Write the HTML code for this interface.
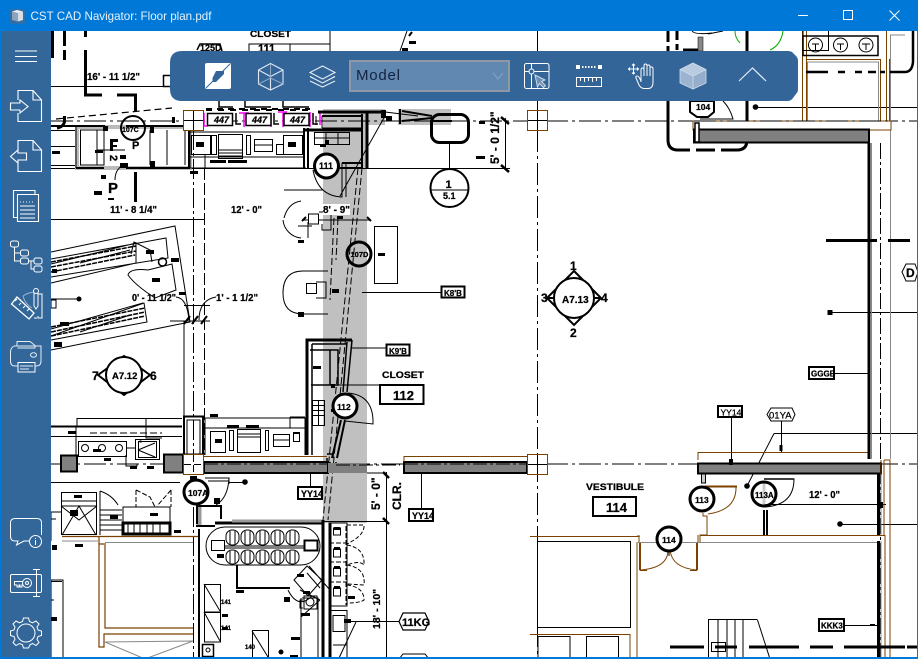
<!DOCTYPE html>
<html><head><meta charset="utf-8"><style>
html,body{margin:0;padding:0;width:918px;height:659px;overflow:hidden;background:#fff}
svg{display:block;position:absolute;left:0;top:0}
.t{font-family:"Liberation Sans",sans-serif;font-weight:bold;fill:#000;stroke:#000;stroke-width:.25}
.s{font-size:6px}.m{font-size:9px}.b{font-size:10.5px}.l{font-size:13px}
</style></head><body>
<svg width="918" height="659" viewBox="0 0 918 659" xmlns="http://www.w3.org/2000/svg">
<rect width="918" height="659" fill="#fff"/>

<!-- grey corridor -->
<g fill="#c0c0c0"><rect x="323" y="109" width="44" height="414"/><rect x="323" y="109" width="62" height="16"/><rect x="398" y="109" width="53" height="16"/></g>

<!-- grid lines -->
<g fill="none" stroke="#000" stroke-width="1">
<path d="M51 121H918" stroke-dasharray="22 4 3 4"/>
<path d="M51 464H918" stroke-dasharray="22 4 3 4"/>
<path d="M537.5 31V659" stroke-dasharray="22 4 3 4"/>
<path d="M193.5 130V659" stroke-dasharray="20 3 3 3"/>
<path d="M204.5 168V455" stroke-dasharray="12 3"/>
<path d="M880.5 143V659" stroke-dasharray="16 3 3 3"/>
<path d="M51 86.5H170M51 168.5H510M51 219.5H204M184 305.5H210M51 482.5H180M229 482.5H245"/>
<path d="M56 119 172 108" stroke-dasharray="7 4" stroke-width="1.2"/>
<path d="M184 321V455"/>
<path d="M505.5 118V170M386.5 472V659M323 521.5H386M421.5 473V509M310.5 473V487M731.5 417V463"/>
<path d="M755 107.5H918M830 312.5H918M834 373.5H868M845 625.5H878M362 292.5H441M765 504.5H886M840 524.5H918M774 433.5H918M774 433.5 747 486M781.5 421V452M345 621.5H399"/>
<path d="M351 348H386M331 385H380"/>
<path d="M449.5 143V170"/>
</g>

<!-- top left thick -->
<g fill="none" stroke="#000" stroke-width="3">
<path d="M64.5 31V46M64.5 50V60M52.5 31V58" />
<path d="M64.5 116V122Q63 127 57 128"/>
<path d="M85.5 31V37M85.5 50V95H102M117 95H135.5V112"/>
<path d="M135.5 172V202"/>
</g>

<!-- top-left rooms -->
<rect x="77" y="127" width="113" height="41" fill="none" stroke="#bbb" stroke-width="4"/>
<g fill="none" stroke="#000">
<path d="M51 126H105M126 126H190" stroke-width="2"/>
<path d="M51 130.5H75M51 146.5H75M51 165.5H75M76 125V168" />
<path d="M76 168H104M126 168H190" stroke-width="2"/>
<path d="M80.5 130V165H104V130ZM97 130V165M97 150H125" />
<path d="M150 130V165M167 130V165M185 130V165"/>
<path d="M189 125V168" stroke-width="2"/>
<circle cx="133" cy="128" r="12" stroke-width="2"/>
<path d="M115 180Q115 170 122 166"/>
</g>
<g>
<rect x="110" y="139" width="8" height="3"/><rect x="110" y="139" width="3" height="12"/><rect x="110" y="145" width="7" height="2"/>
<rect x="95" y="150" width="8" height="3"/><rect x="52" y="151" width="8" height="3"/>
<rect x="120" y="155" width="6" height="4"/><rect x="101" y="175" width="5" height="4"/><rect x="94" y="191" width="8" height="4"/><rect x="108" y="198" width="6" height="2"/>
<rect x="190" y="171" width="8" height="3"/>
<rect x="103" y="126" width="5" height="5"/><rect x="150" y="127" width="4" height="6"/><rect x="172" y="117" width="3" height="6"/>
<rect x="120" y="163" width="8" height="5"/><rect x="150" y="161" width="5" height="7"/>
</g>
<text class="t" x="122" y="132" font-size="7">107C</text>
<text class="t" x="108" y="193" font-size="15" style="font-weight:bold">P</text>
<text class="t" x="110" y="165" font-size="11" transform="rotate(90 115 160)">2</text>
<text class="t" x="132" y="149" font-size="11">P</text>
<text class="t b" x="87" y="80" textLength="53" lengthAdjust="spacingAndGlyphs">16' - 11 1/2"</text>
<rect x="163.500" y="75.500" width="9" height="11" fill="#fff" stroke="#000" stroke-width="1.500"/>
<text class="t b" x="110" y="213" textLength="47" lengthAdjust="spacingAndGlyphs">11' - 8 1/4"</text>
<text class="t b" x="231" y="213" textLength="31" lengthAdjust="spacingAndGlyphs">12' - 0"</text>

<!-- counter -->
<g fill="none" stroke="#000">
<path d="M190 131V168H306M189 132H303M190 157H303M205 168V155"/>
<rect x="191.500" y="135.500" width="19" height="19"/><rect x="211.500" y="135.500" width="5" height="19"/>
<rect x="218.500" y="134.500" width="24" height="24"/>
<path d="M218 150H242M218 153H242M218 156H242"/>
<rect x="246.500" y="135.500" width="4" height="19"/><rect x="254.500" y="139.500" width="18" height="12"/><path d="M254 145H272"/>
<rect x="276.500" y="144.500" width="7" height="10"/><rect x="283.500" y="135.500" width="19" height="19"/>
</g>
<rect x="196" y="142" width="8" height="5"/><rect x="288" y="142" width="8" height="5"/><rect x="210" y="160" width="16" height="3"/><rect x="228" y="160" width="19" height="3"/>

<!-- 447 tags -->
<g fill="none" stroke="#f0f" stroke-width="1.500"><path d="M204 113V126M232 113V126M244 113V127M271 113V127M283 113V127M310 112V127M320 112V125M204 126H208M239 113H249M278 112H287"/></g>
<g fill="#fff" stroke="#000" stroke-width="1.500"><rect x="207.500" y="113.500" width="25" height="12"/><rect x="246" y="113.500" width="25" height="12"/><rect x="284" y="113.500" width="25" height="12"/></g>
<g font-size="9" class="t" font-style="italic"><text x="214" y="123" style="font-style:italic">447</text><text x="252" y="123" style="font-style:italic">447</text><text x="290" y="123" style="font-style:italic">447</text></g>
<path d="M236 113V124H241M274 113V124H279M313 113V124H318" fill="none" stroke="#000" stroke-width="1.500"/>
<path d="M206 110H310" stroke="#000" stroke-width="2" stroke-dasharray="6 6"/>
<rect x="183.500" y="110.500" width="20" height="20" fill="#fff" stroke="#7a4100"/><path d="M193.500 111V130M184 120.500H203" stroke="#000"/>
<rect x="527.500" y="110.500" width="20" height="20" fill="#fff" stroke="#7a4100"/><path d="M537.500 111V130M528 120.500H547" stroke="#000"/>

<!-- room 111 & corridor walls -->
<g fill="none" stroke="#000">
<path d="M304 128V168M308 128V168M362 114V168" stroke-width="2"/>
<path d="M318 112H385" stroke-width="3"/>
<path d="M322 116H362" stroke-width="2"/>
<path d="M305 130H363" stroke-width="3"/>
<path d="M367 113V169" stroke-width="3"/>
<path d="M316 116V125M322 116V128M322 128H362" />
<rect x="314.500" y="132.500" width="35" height="12"/><path d="M326 132V144M338 132V144M314 138H349"/>
<path d="M340 168H362M342 163H362" stroke-width="2"/>
<path d="M342 163V197H340M346 163V197"/>
<path d="M385 116 340 196M385 112 418 116"/>
<path d="M400 109V124M402 111 432 116M402 121 432 118M432 121H452" stroke-width="2"/>
<path d="M362 168 328 520" stroke-dasharray="7 3"/>
<path d="M358 168 323 520" stroke-dasharray="7 3"/>
<path d="M338 218 336 260M334 218 330 300" stroke-dasharray="7 3"/>
<rect x="431.500" y="114.500" width="37" height="28" rx="8" stroke-width="3"/>
<circle cx="449.500" cy="188" r="19" fill="#fff" stroke-width="2"/><path d="M430 190H468"/>
<circle cx="326.500" cy="166" r="12" fill="#fff" stroke-width="3"/>
<path d="M313 170Q318 196 342 197"/>
</g>
<rect x="386" y="116" width="6" height="5"/><rect x="381" y="110" width="5" height="8"/><rect x="325" y="140" width="4" height="4"/>
<rect x="320" y="144" width="6" height="3"/>
<rect x="479" y="121" width="6" height="3"/><rect x="476" y="156" width="9" height="3"/>
<text class="t m" x="319" y="169" font-size="9.500">111</text>
<text class="t" x="445.500" y="188" font-size="11">1</text><text class="t m" x="443" y="199">5.1</text>
<text class="t" transform="translate(499 164) rotate(-90)" font-size="12">5' - 0 1/2"</text>
<path d="M501 117 509 124M501 165 509 172" stroke="#000" stroke-width="2.500"/>

<!-- 8'-9" door -->
<g fill="none" stroke="#000">
<path d="M323 190 284 190 M283 220A20 20 0 0 0 301 238M301 201Q288 203 284 218"/>
<path d="M303 220H370"/>
<rect x="308.500" y="214" width="10" height="10" fill="#fff"/><path d="M319 212H329M322 224V230H331V212M298 226H312M308 222V238"/>
<path d="M302 221 306 217M367 217 371 221" stroke-width="2"/>
</g>
<rect x="323" y="204" width="27" height="11" fill="#fff"/><text class="t b" x="323" y="213" textLength="27" lengthAdjust="spacingAndGlyphs">8' - 9"</text>
<rect x="337" y="216" width="6" height="3"/><rect x="298" y="240" width="6" height="3"/>

<g fill="#fff" stroke="#000"><rect x="374.500" y="226.500" width="23" height="57"/></g>
<rect x="378" y="253" width="7" height="3"/>
<circle cx="359" cy="254" r="12" fill="none" stroke="#000" stroke-width="3"/>
<text class="t" x="350.500" y="257" font-size="7.500">107D</text>
<rect x="441.500" y="286.500" width="23" height="11" fill="#fff" stroke="#000" stroke-width="2"/><text class="t" x="444" y="296" font-size="8">K8'B</text>

<g fill="none" stroke="#000"><path d="M328 271H303Q283 271 283 293Q283 314 303 314H328"/>
<rect x="306.500" y="283.500" width="10" height="10"/><path d="M316 282H326V298H316"/></g>
<rect x="332" y="289" width="7" height="4"/><rect x="298" y="312" width="6" height="5"/>

<!-- diamond A7.13 -->
<g fill="none" stroke="#000" stroke-width="2"><path d="M574 271 601 298 574 325 547 298Z"/><circle cx="574" cy="298" r="20" fill="#fff"/><path d="M554 298H548M594 298H600"/></g>
<text class="t" x="562" y="303" font-size="10">A7.13</text>
<text class="t" x="570" y="270" font-size="12">1</text><text class="t" x="570" y="337" font-size="12">2</text><text class="t" x="541" y="302" font-size="12">3</text><text class="t" x="601" y="302" font-size="12">4</text>

<!-- diagonal table -->
<g fill="none" stroke="#000">
<path d="M51 252 175 226 190 322 51 350M51 259 166 238 168 258 51 277M51 264 136 243 136 263 51 283M51 336 144 303 147 322 51 340M51 329 143 303M80 263 130 250M80 332 130 315"/>
<path d="M51 262 136 246M51 267 136 251M51 272 135 255M51 327 145 308M51 332 145 312M51 336 145 316" stroke-width="1.500" stroke-dasharray="5 1"/>
<path d="M131 254 134 242 150 250 152 262M148 270 172 264 176 290 155 298Q135 285 128 275 130 268 148 270"/>
<circle cx="162.500" cy="262" r="4" stroke-width="1.500"/>
</g>
<rect x="51" y="300" width="5" height="8" fill="#fff" stroke="#000"/>
<g><rect x="146" y="250" width="8" height="4"/><rect x="171" y="258" width="8" height="4"/><rect x="152" y="278" width="8" height="4"/><rect x="52" y="269" width="5" height="4"/><rect x="60" y="322" width="9" height="4"/><rect x="54" y="342" width="8" height="5"/><rect x="179" y="292" width="7" height="3"/></g>
<path d="M51 299H80" stroke="#000"/><circle cx="79" cy="299" r="2.500"/>

<text class="t b" x="132" y="301" textLength="44" lengthAdjust="spacingAndGlyphs">0' - 11 1/2"</text>
<text class="t b" x="216" y="301" textLength="42" lengthAdjust="spacingAndGlyphs">1' - 1 1/2"</text>
<g fill="none" stroke="#000"><path d="M176 297Q187 298 189 320M216 297Q199 300 199 320M170 321H210"/>
<path d="M184 324 190 316M192 324 198 316M201 324 207 316" stroke-width="2"/></g>

<!-- A7.12 -->
<g fill="none" stroke="#000" stroke-width="2"><path d="M98 375 124 356 150 375 124 395Z"/><circle cx="124" cy="375" r="18" fill="#fff"/></g>
<text class="t" x="112" y="379" font-size="9.500">A7.12</text><text class="t" x="92" y="380" font-size="12">7</text><text class="t" x="150" y="380" font-size="12">6</text>

<!-- column + left kitchens -->
<g fill="none" stroke="#000">
<rect x="184" y="416.500" width="19" height="38" stroke-width="2"/><rect x="187" y="420" width="13" height="34"/>
<path d="M51 426.500H182" stroke-width="2"/><path d="M77 418.500H182M77 418V426M51 436.500H182M76 427V458M146 418V438H162"/>
<path d="M90 433H162" stroke-dasharray="7 3"/>
<rect x="78.500" y="441.500" width="48" height="15"/><circle cx="85" cy="448" r="3.500"/><circle cx="102" cy="448" r="3.500"/><circle cx="119" cy="448" r="3.500"/>
<rect x="135.500" y="439.500" width="24" height="20"/><rect x="138.500" y="441.500" width="18" height="16"/><path d="M138 450 155 443M138 450 155 457"/>
<path d="M126 448H135M126 455V466H137V464"/>
<rect x="140" y="441" width="1" height="1"/>
</g>
<rect x="93" y="449" width="8" height="3"/><rect x="104" y="458" width="7" height="3"/><rect x="130" y="466" width="7" height="3"/><rect x="147" y="466" width="7" height="3"/>
<rect x="68" y="431" width="8" height="3"/><rect x="210" y="414" width="8" height="3"/>

<!-- middle kitchen -->
<g fill="none" stroke="#000">
<path d="M205 418H305V455M205 428H305M205 418V455"/>
<rect x="210.500" y="431.500" width="15" height="21"/><rect x="229.500" y="430.500" width="4" height="20"/>
<rect x="237.500" y="429.500" width="23" height="23"/><path d="M237 434H260M237 437H260"/>
<rect x="265.500" y="430.500" width="3" height="20"/><rect x="273.500" y="434.500" width="16" height="12"/><path d="M273 440H289"/><rect x="293.500" y="433.500" width="6" height="8"/>
</g>
<rect x="215" y="439" width="7" height="4"/><rect x="227" y="425" width="12" height="3"/><rect x="246" y="425" width="13" height="3"/>

<!-- closet -->
<g fill="none" stroke="#000">
<path d="M307 455V340H352" stroke-width="3" fill="none"/>
<path d="M352 340 347 392M347 342 343 392" stroke-width="1.500"/>
<path d="M310 350H338V385H311M330 350V385M312 344H347M312 344V455" stroke-width="1.500"/>
<path d="M341 420 332 458M345 420 337 458" stroke-width="2"/>
<rect x="312.500" y="400.500" width="12" height="5"/><rect x="312.500" y="405.500" width="12" height="5"/><rect x="312.500" y="410.500" width="6" height="5"/><rect x="318.500" y="410.500" width="6" height="5"/><rect x="312.500" y="415.500" width="6" height="10"/><rect x="318.500" y="415.500" width="6" height="10"/>
<path d="M318.500 400V425M290 417H305M290 428H305M290 417V428"/>
<rect x="293.500" y="432.500" width="6" height="9"/>
<path d="M348 393Q372 395 373 420V424L345 421"/>
<circle cx="345" cy="406" r="12" fill="#fff" stroke-width="3"/>
<path d="M327 454H333V458M327 458V472H336V462M330 462V472" stroke-width="1.500"/>
</g>
<rect x="331" y="409" width="3" height="3"/><rect x="313" y="366" width="8" height="3"/><rect x="331" y="384" width="4" height="4"/>
<text class="t" x="337" y="410" font-size="8.500">112</text>
<rect x="386.500" y="344.500" width="23" height="11" fill="#fff" stroke="#000" stroke-width="2"/><text class="t" x="389" y="354" font-size="8">K9'B</text>
<text class="t" x="382" y="378" font-size="9.500" textLength="42" lengthAdjust="spacingAndGlyphs">CLOSET</text>
<rect x="380" y="385" width="43.500" height="19" fill="#fff" stroke="#000" stroke-width="2"/><text class="t" x="393" y="400" font-size="13">112</text>

<!-- main walls row -->
<g stroke="#000" stroke-width="2" fill="#808080">
<rect x="61" y="455.500" width="16" height="16"/>
<rect x="164" y="454.500" width="19" height="18"/>
<rect x="204" y="462" width="124" height="11"/>
<rect x="404" y="462" width="123" height="11"/>
<rect x="698" y="463.500" width="183" height="10"/>
</g>
<rect x="328" y="463" width="39" height="10" fill="#808080"/>
<path d="M367 473H386" stroke="#000"/>
<rect x="183.500" y="454.500" width="20" height="20" fill="#fff" stroke="#7a4100"/><path d="M193.500 455V474M184 464.500H203" stroke="#000" stroke-dasharray="7 3"/>
<rect x="527.500" y="454.500" width="20" height="20" fill="#fff" stroke="#7a4100"/><path d="M537.500 455V474M528 464.500H547" stroke="#000"/>
<g fill="none" stroke="#7a4100" stroke-width="1"><path d="M204 456.500H327M404 456.500H527M404 456V462M698 460V452.500H868"/></g>
<path d="M204 464H328M404 464H527" stroke="#000" stroke-dasharray="14 3 3 3"/>
<path d="M336 465H400" stroke="#000" stroke-dasharray="14 3 3 3"/>

<!-- YY14 tags -->
<g fill="#fff" stroke="#000" stroke-width="2"><rect x="298" y="487" width="24" height="12"/><rect x="409" y="509" width="24" height="12"/></g>
<text class="t" x="301" y="497" font-size="9">YY14</text><text class="t" x="412" y="519" font-size="9">YY14</text>
<text class="t" transform="translate(380 510) rotate(-90)" font-size="12">5' - 0"</text>
<text class="t" transform="translate(401 510) rotate(-90)" font-size="12">CLR.</text>
<path d="M383 472 389 478M383 518 389 524" stroke="#000" stroke-width="2.500"/>

<!-- 107A -->
<rect x="190" y="476" width="7" height="7"/>
<circle cx="196" cy="492" r="12" fill="#fff" stroke="#000" stroke-width="3"/>
<text class="t" x="188" y="496" font-size="8.500">107A</text>
<g fill="none" stroke="#000"><path d="M205 478H229V484M208 481H229M229 478Q228 498 216 505"/></g>
<circle cx="245" cy="482" r="2.800"/><rect x="214" y="498" width="6" height="6"/>

<!-- bottom left -->
<g fill="none" stroke="#000">
<rect x="61.500" y="492.500" width="35" height="42"/><path d="M61 501H97M61 506H97M62 535 79 506 96 535M61 506 79 520 97 506"/>
<path d="M100 491V535M100 491Q112 495 118 505M100 510H122M100 515H122M100 520H122M100 525H122M100 530H122" />
<path d="M123 507V535H170V507ZM123 522H170"/>
<path d="M123 523H170V534H123Z" stroke-width="3"/>
<path d="M128 524V534M134 524V534M140 524V534M147 524V534M153 524V534M160 524V534"/>
<path d="M136 490V507M136 490 150 497 155 507M171 490 157 506M171 490V507" stroke-dasharray="5 2"/>
<path d="M51 512H61M51 512V541M51 519H56"/>
<path d="M51 580H63V659M51 600H54"/>
<path d="M51 580V659"/>
</g>
<rect x="51" y="581" width="11" height="1"/>
<rect x="74" y="495" width="8" height="3"/><rect x="70" y="510" width="8" height="6"/><rect x="75" y="544" width="8" height="3"/><rect x="51" y="617" width="6" height="4"/><rect x="150" y="513" width="8" height="3"/><rect x="174" y="530" width="7" height="3"/><rect x="52" y="545" width="5" height="5"/><rect x="110" y="515" width="8" height="4"/>
<g fill="none" stroke="#7a4100" stroke-width="1.200">
<path d="M62 536.500H198M99 537V647H104V634H193M105 543V628H193M99 544H104"/>
</g>
<path d="M62 541H98M105 542.500H193" stroke="#888"/><path d="M104 642 193 641M105 642 145 659M145 659 193 641" stroke="#888" fill="none"/>

<!-- conference room -->
<path d="M199 505V525" stroke="#999" stroke-width="5" fill="none"/>
<g fill="none" stroke="#000">
<path d="M197 506H221V519M196 526H215M197 505V524" stroke-width="2"/>
<path d="M215 523H323" stroke-width="3"/><path d="M199 529V659" stroke-width="2"/>
<path d="M232 521H322" stroke="#999" stroke-width="3"/>
<rect x="206" y="527" width="114" height="38" rx="19"/>
<path d="M225 546H305M225 548H305" />
<path d="M237 565V588H290" stroke-width="2"/>
<rect x="226" y="530" width="13" height="15" rx="6"/><rect x="241" y="530" width="13" height="15" rx="6"/><rect x="256" y="530" width="13" height="15" rx="6"/><rect x="271" y="530" width="13" height="15" rx="6"/><rect x="286" y="530" width="13" height="15" rx="6"/>
<rect x="226" y="550" width="13" height="14" rx="6"/><rect x="241" y="550" width="13" height="14" rx="6"/><rect x="256" y="550" width="13" height="14" rx="6"/><rect x="271" y="550" width="13" height="14" rx="6"/><rect x="286" y="550" width="13" height="14" rx="6"/>
<path d="M230 531V545M235 531V545M245 531V545M250 531V545M260 531V545M265 531V545M275 531V545M280 531V545M290 531V545M295 531V545M230 551V563M235 551V563M245 551V563M250 551V563M260 551V563M265 551V563M275 551V563M280 551V563M290 551V563M295 551V563"/>
<rect x="211.500" y="540.500" width="13" height="10"/><rect x="304.500" y="540.500" width="13" height="10" stroke-width="2"/>
<rect x="204.500" y="584.500" width="16" height="28"/>
<path d="M204 584 220 611M204 612H220M204 612 220 641M204.500 612V642H220.500V612"/>
<rect x="252.500" y="630.500" width="16" height="28"/><path d="M252 631 268 657"/>
<path d="M294 580 307 566 322 580 308 596ZM307 573 320 588M309 566 330 590"/>
<path d="M330 600V620M300 590 320 600M288 590Q298 610 312 596"/>
</g>
<g><rect x="236" y="590" width="8" height="3"/><rect x="217" y="554" width="7" height="4"/><rect x="284" y="597" width="6" height="5"/><rect x="301" y="613" width="9" height="3"/><rect x="291" y="637" width="9" height="3"/><rect x="290" y="655" width="8" height="2"/><rect x="297" y="574" width="7" height="3"/><rect x="303" y="591" width="7" height="3"/><rect x="222" y="614" width="6" height="3"/><rect x="222" y="627" width="6" height="3"/></g>
<circle cx="281" cy="652" r="2.500"/>
<rect x="202.500" y="644.500" width="11" height="12" fill="none" stroke="#000" stroke-width="1.500"/><circle cx="208" cy="650" r="2" fill="none" stroke="#000"/>
<g class="t s"><text x="221" y="604">141</text><text x="221" y="630">141</text><text x="245" y="649">140</text></g>

<!-- right of conf: cabinets -->
<g fill="none" stroke="#000">
<path d="M323 520V659M330 523V659" stroke-width="3"/>
<rect x="329" y="523" width="18" height="83"/>
<path d="M329 543H347M329 562H347M329 582H347M346 526V605" stroke-dasharray="5 2"/>
<rect x="333.500" y="528" width="7" height="7"/><rect x="333.500" y="549" width="7" height="8"/><rect x="333.500" y="568" width="7" height="8"/><rect x="333.500" y="588" width="7" height="8"/>
<path d="M347 525H364Q365 535 347 544M347 545Q365 548 364 565Q360 560 347 565M347 565Q366 568 364 585L347 584M347 585Q364 587 364 600Q360 603 347 603" stroke-dasharray="4 2"/>
<rect x="329" y="610.500" width="18" height="48"/><rect x="333" y="615.500" width="12" height="16"/><path d="M333 645H347V659M356 622 339 658"/>
<path d="M302 598H318V659M301 598V659M301 617 320 600" stroke="#000"/>
<rect x="304" y="596" width="13" height="13"/>
<circle cx="310" cy="602" r="4"/>
<path d="M303 600H300V608H303"/>
</g>
<rect x="334" y="527" width="6" height="3"/><rect x="334" y="547" width="6" height="3"/><rect x="334" y="566" width="6" height="3"/><rect x="334" y="586" width="6" height="3"/><rect x="348" y="596" width="7" height="3"/><rect x="344" y="619" width="7" height="4"/>
<text class="t" transform="translate(380 629) rotate(-90)" font-size="10.500">18' - 10"</text>
<path d="M399 621.500 403 613H425L429 621.500 425 630H403Z" fill="#fff" stroke="#000" stroke-width="1.200"/>
<text class="t" x="402" y="626" font-size="11">11KG</text>
<path d="M399 659 403 654H425L429 659" fill="none" stroke="#000"/>

<!-- VESTIBULE -->
<text class="t" x="586" y="490" font-size="9.500" textLength="58" lengthAdjust="spacingAndGlyphs">VESTIBULE</text>
<rect x="593" y="497" width="43" height="19" fill="#fff" stroke="#000" stroke-width="2"/><text class="t" x="606" y="512" font-size="13">114</text>
<g fill="none" stroke="#7a4100" stroke-width="1">
<path d="M530 536.500H639V542M530 634.500H630V659M637 542V659M700 535.500H884V460M707 535V516H703V513"/>
<path d="M705 486H736Q737 510 708 514" />
<path d="M705 486.500H737" stroke-width="2"/>
<path d="M640 543V570Q668 568 668 550M697 543V570Q672 568 670 550M640 570.500H647M690 570.500H697" />
<path d="M640 543V570M697 543V570" stroke-width="2"/>
<path d="M884 460H890V659M881 460V536M885 535V659" />
<path d="M637 536H640M698 535V542"/>
<path d="M707 535H700V542"/>
</g>
<path d="M638 542.500H880" stroke="#888"/>
<g fill="none" stroke="#000">
<rect x="537.500" y="541.500" width="93" height="86" stroke-width="1"/>
<rect x="538" y="636.500" width="32" height="30"/><rect x="586.500" y="636.500" width="32" height="30"/>
<path d="M878.500 474V535M878.500 541V659" stroke-width="3"/>
<path d="M881 474V535M881 541V659" stroke="#888"/>
<path d="M871.500 143V459" stroke="#888"/>
<path d="M890.500 129V459" stroke="#888"/>
<path d="M869 143V459" stroke-width="3" stroke="#000"/>
<rect x="701.500" y="474" width="4" height="9" stroke-width="1" fill="#ccc"/>
<path d="M764 510V535M767 510V535" stroke-width="2"/>
<path d="M708.500 619.500H757.500M708.500 619V659M718 620V659M727 620V659M735 620V659M743 620V659M757.500 620 770 659"/>
<rect x="711.500" y="642.500" width="14" height="9"/>
<path d="M670 647H704M715 647H737M749 647H799M810 647H833M844 647H905M907 647H918" stroke-width="3"/>
</g>
<circle cx="702" cy="499" r="12" fill="#fff" stroke="#000" stroke-width="3"/><text class="t" x="695" y="503" font-size="8.500">113</text>
<path d="M764 479H794Q794 505 765 507" fill="none" stroke="#000"/>
<path d="M764 479H794" stroke="#000" stroke-width="1.500"/>
<path d="M764 482V507" stroke="#ccc" stroke-width="3"/>
<circle cx="764" cy="494" r="12" fill="none" stroke="#000" stroke-width="3"/><text class="t" x="755" y="498" font-size="8">113A</text>
<circle cx="669" cy="539" r="12" fill="#fff" stroke="#000" stroke-width="3"/><text class="t" x="662" y="543" font-size="8.500">114</text>
<path d="M669 551V556" stroke="#000"/>
<text class="t b" x="809" y="498" textLength="31" lengthAdjust="spacingAndGlyphs">12' - 0"</text>
<circle cx="747" cy="486" r="2.800"/><circle cx="840" cy="524" r="2.800"/>
<rect x="718" y="406" width="24" height="11" fill="#fff" stroke="#000" stroke-width="2"/><text class="t" x="720.500" y="415.500" font-size="8.500" style="font-weight:normal">YY14</text>
<path d="M767 414.500 771 408H792L795 414.500 792 421H771Z" fill="#fff" stroke="#000"/><text class="t" x="769" y="418.500" font-size="9.500" style="font-weight:normal">01YA</text>
<rect x="729" y="459" width="4" height="6"/><rect x="779.500" y="445" width="3" height="6"/><rect x="878" y="502" width="5" height="6"/><rect x="870" y="624" width="5" height="2"/>
<rect x="819" y="619" width="25" height="12" fill="#fff" stroke="#000" stroke-width="2"/><text class="t" x="821" y="628.500" font-size="8">KKK3</text>

<!-- right top -->
<rect x="809" y="367" width="25" height="12" fill="#fff" stroke="#000" stroke-width="2"/><text class="t" x="811" y="376.500" font-size="8">GGGB</text>
<rect x="827.500" y="310" width="5" height="5"/>
<path d="M826 240.500H877M888 240.500H910" stroke="#000" stroke-width="3"/>
<path d="M902 272 906 264H915L918 272 915 281H906Z" fill="#fff" stroke="#000"/><text class="t" x="906" y="277" font-size="12">D</text>
<g fill="none" stroke="#000">
<path d="M668 31V42M668 46V62M668 101V140Q668 150 678 150H690M696 150H715M721 150H737Q747 150 747 140V101M747 31V62" stroke-width="3"/>
<path d="M677 31V40M677 44V50" stroke-width="3"/>
<path d="M692 31Q695 35 712 33M723 31 708 34"/>
<path d="M700 119H733Q730 108 723 101"/>
<path d="M802.500 31V121M806.500 31V121" stroke="#7a4100"/>
<path d="M886.500 31V121M889.500 59V121" stroke="#7a4100"/>
<rect x="806.500" y="59.500" width="74" height="62" stroke="#7a4100"/>
<rect x="807.500" y="62" width="71" height="59" stroke="#888"/>
<path d="M890.500 35V121M905 35H890" stroke="#888"/>
<rect x="803" y="36" width="75" height="19.500" stroke-width="1.500"/><path d="M828.500 31V50.500H803"/>
<path d="M803 31V36"/>
<circle cx="815.500" cy="45" r="7"/><circle cx="840.500" cy="45" r="7"/><circle cx="866" cy="45" r="7"/>
<path d="M812 44H819M815.500 44V50M837 44H844M840.500 44V50M862 44H870M866 44V50"/>
<path d="M806 72H828M838 72H845M855 72H862M868 72H876M880 72H885M890 72H905Q912 72 913 62V31" stroke-width="2.500"/>
<path d="M735 31Q735 38 740 43M770 50Q781 45 783 31" stroke="#0a0"/>
<path d="M683 50H700" stroke-width="3"/>
</g>
<rect x="698" y="37" width="5" height="14" fill="#888" stroke="#000" stroke-width=".5"/>
<rect x="693" y="121" width="198" height="9" fill="#fff" stroke="#7a4100"/>
<path d="M694 121H890" stroke="#000" stroke-dasharray="22 4 3 4"/>
<rect x="694" y="129.500" width="175" height="13" fill="#808080" stroke="#000" stroke-width="2"/>
<rect x="695" y="123" width="4" height="19" fill="#fff" stroke="#000" stroke-width="1.500"/>
<circle cx="755.500" cy="107" r="2.800"/>
<path d="M690 101V112L697 117H708L714 112V101Z" fill="#fff" stroke="#000" stroke-width="2"/>
<text class="t" x="696" y="110" font-size="8.500">104</text>

<!-- stuff above toolbar -->
<g fill="none" stroke="#000">
<path d="M197 50 200 44H220L222 51" stroke-width="1.500" fill="#fff"/>
<path d="M249 51V44H290V51M290 44H330V51M330 31V51"/>
<path d="M407 31 400 51" />
</g>
<text class="t" x="200" y="51" font-size="9">125D</text>
<text class="t" x="250" y="37" font-size="9.500" textLength="41" lengthAdjust="spacingAndGlyphs">CLOSET</text>
<text class="t" x="258" y="52" font-size="11">111</text>
<rect x="409" y="41" width="7" height="3"/><rect x="402" y="48" width="6" height="3"/><path d="M409 36 412 32" stroke="#000" stroke-width="2"/>

<!-- below toolbar bits -->
<g fill="none" stroke="#000" stroke-width="1.500"><path d="M219 101V107H233M245 101V107H271M283 101V107H309"/></g>
<path d="M206 109H310" stroke="#000" stroke-width="2" stroke-dasharray="6 5"/>

<!-- chrome -->
<rect x="0" y="0" width="918" height="31" fill="#0078d7"/>
<rect x="0" y="0" width="1" height="659" fill="#0078d7"/>
<rect x="917" y="0" width="1" height="659" fill="#0078d7"/>
<rect x="0" y="657" width="918" height="2" fill="#0078d7"/>
<rect x="1" y="31" width="50" height="626" fill="#336699"/>
<path d="M182 51H788Q792 51 794 54L796 56Q798 58 798 61V89Q798 92 796 94L793 98Q791 101 787 101H182Q170 101 170 89V63Q170 51 182 51Z" fill="#336599"/>

<!-- title -->
<g>
<rect x="10" y="9" width="15" height="15" rx="2" fill="#2f6ea8"/>
<path d="M12 11.500 18 13V21.500L12 20Z" fill="#8fa3b8"/><path d="M18 13 23 11.500V20L18 21.500Z" fill="#d6dfe9"/><path d="M12 11.500 17 10 23 11.500 18 13Z" fill="#eef3f8"/>
</g>
<text x="30.500" y="20" font-family="'Liberation Sans',sans-serif" font-size="12" fill="#e8f1fb" textLength="181" lengthAdjust="spacingAndGlyphs">CST CAD Navigator: Floor plan.pdf</text>
<g fill="none" stroke="#fff" stroke-width="1"><path d="M798 15.500H808"/><rect x="843.500" y="10.500" width="9" height="9"/><path d="M889.500 10.500 899.500 20.500M899.500 10.500 889.500 20.500"/></g>

<!-- sidebar icons -->
<g fill="none" stroke="#fff" stroke-width="1.100">
<path d="M15 51H37M15 56.500H37M15 61.500H37"/>
<path d="M18 100V90.500H33L41.500 100V121.500H18V113M33 90.500V100H41.500"/>
<path d="M10.500 103H20V100L28 106.500 20 113V110H10.500Z"/>
<path d="M18 150V140.500H33L41.500 150V171.500H18V163M33 140.500V150H41.500"/>
<path d="M26.500 153H18V150L10.500 156.500 18 163V160H26.500Z"/>
<path d="M17 217.500H13.500V190.500H35V194"/>
<path d="M17.500 194.500H38.500V221.500H17.500Z"/>
<path d="M20 202H35" stroke-dasharray="1 2"/><path d="M20 206H35M20 210H35M20 214H35M20 218H35"/>
</g>
<g fill="none" stroke="#fff" stroke-width="1">
<rect x="10.500" y="241" width="8" height="6" rx="2"/><rect x="20.500" y="250" width="8" height="6" rx="2"/><rect x="20.500" y="258" width="8" height="6" rx="2"/><rect x="34" y="258" width="8" height="6" rx="2"/><rect x="34" y="266" width="8" height="6" rx="2"/>
<path d="M14.500 247V261H20.500M14.500 253H20.500M28.500 261H34M31 261V269H34"/>
</g>
<g fill="none" stroke="#fff" stroke-width="1">
<path d="M11.500 304 29 319 34 313 17 297Z" stroke-width="1.300"/>
<path d="M15 301 17 299M19 305 21 303M23 308 25 306M27 311 29 309"/>
<path d="M23 296Q27 293 34 292M23 296Q25 304 32 308" stroke="#9fb6cf"/>
<circle cx="36" cy="291" r="2.500"/>
<path d="M34 293V306L36 309 38 306V293"/>
<path d="M38 294H42V318H38V316M34 318H37" />
</g>
<g fill="none" stroke="#e4ecf4" stroke-width="1">
<path d="M17 345.500V341.500H30L35 345.500V348H17.500" />
<path d="M14 346H41V361Q41 366 36 366H33"/><path d="M14 346Q10.500 348 10.500 352V361Q10.500 366 15 366H18"/>
<ellipse cx="33.500" cy="355" rx="3" ry="2.200"/>
<rect x="18" y="362.500" width="17" height="9.500" fill="#336699" stroke="#fff"/><path d="M20 366H33M20 369H29"/>
</g>
<g fill="none" stroke="#fff" stroke-width="1">
<path d="M29.500 541H24L16.500 545 18 541H15Q10.500 541 10.500 536V523Q10.500 518.500 15 518.500H37Q41.500 518.500 41.500 523V535"/>
<circle cx="35.500" cy="541.500" r="6"/>
<path d="M35.500 540V545M35.500 538V539"/>
<rect x="10.500" y="574.500" width="31" height="18" rx="1.500"/>
<path d="M36.500 569.500V596.500M33 569.500H40M33 596.500H40" fill="none"/>
<circle cx="27" cy="583" r="4.500"/><circle cx="27" cy="583" r="1.500"/>
<path d="M22.500 581.500H14.500V585H17V587H19V585H20V587H22V585H23"/>
<circle cx="26" cy="633" r="9"/>
<path d="M23.500 618H28.500L29.500 621.500 32.500 622.800 36 621 39 624 37 627 38 630 41.500 631V635.500L38 636.500 37 639.500 39 642.500 36 645.500 32.500 643.500 30 644.800 28.500 648H23.500L22.500 644.800 19.500 643.500 16 645.500 13 642.500 15 639.500 14 636.500 10.500 635.500V631L14 630 15 627 13 624 16 621 19.500 622.800 22.500 621.500Z" stroke-width="1"/>
</g>

<!-- toolbar icons -->
<rect x="205" y="63" width="26" height="26" rx="2" fill="#fff"/>
<path d="M206 88 230 64" stroke="#336599" stroke-width="1"/>
<path d="M216 71H224V74L216 82H212.500V78Z" fill="#336599"/>

<g fill="none" stroke="#dfe8f2" stroke-width="1.100">
<path d="M270.500 63.500 283 70V84L270.500 90 258.500 84V70ZM258.500 70 270.500 76.500 283 70M270.500 76.500V90"/>
</g>
<g fill="none" stroke="#8fa9c6" stroke-width="1"><path d="M258.500 84 270.500 78 283 84M270.500 64V78"/></g>
<g fill="none" stroke="#e6edf5" stroke-width="1.100">
<path d="M322.500 66 335 72.500 322.500 79 310 72.500Z"/>
<path d="M310 76.500 322.500 83 335 76.500"/><path d="M310 81 322.500 87 335 81M310 76.500 313 78M335 76.500 332 78"/>
</g>

<!-- select -->
<rect x="350" y="61" width="159" height="30" fill="#6188b0" stroke="#8f98a3" stroke-width="2"/>
<text x="356" y="80" font-family="'Liberation Sans',sans-serif" font-size="15" fill="#14233f" textLength="44">Model</text>
<path d="M493 73 498 79 503 73" fill="none" stroke="#8aa3c0" stroke-width="1"/>

<g fill="none" stroke="#fff" stroke-width="1">
<rect x="524.500" y="63.500" width="24.500" height="25" rx="2"/>
<path d="M524 71.500H549M531.500 63V89"/>
<circle cx="531.500" cy="71.500" r="2.500" fill="#336599"/>
<path d="M535 75 545 80 541.500 81.500 545.500 85.500 543.500 87.500 539.500 83.500 537.500 87Z" stroke="#cfd9e5" fill="#6c8fb3"/>
</g>
<g fill="#fff">
<rect x="576" y="65" width="4" height="4"/><rect x="598" y="65" width="4" height="4"/>
<rect x="582" y="66" width="1.500" height="2"/><rect x="585" y="66" width="1.500" height="2"/><rect x="588" y="66" width="1.500" height="2"/><rect x="591" y="66" width="1.500" height="2"/><rect x="594" y="66" width="1.500" height="2"/>
</g>
<g fill="none" stroke="#fff" stroke-width="1"><rect x="576.500" y="77.500" width="25" height="9"/><path d="M580.500 78V81M584.500 78V82M588.500 78V81M592.500 78V82M596.500 78V81"/></g>
<g fill="none" stroke="#fff" stroke-width="1">
<path d="M633.500 64V74M628.500 69H638.500M632 65.500 633.500 64 635 65.500M632 72.500 633.500 74 635 72.500M630 67.500 628.500 69 630 70.500M637 67.500 638.500 69 637 70.500"/>
<path d="M641 82V70Q641 68 642.500 68T644 70V65.500Q644 64 645.500 64T647 65.500V66Q647 65 648.500 65T650 66.500V68Q650 67 651.500 67T653 68.500V82Q653 88.500 648 88.500H644Q641 88.500 639 85L636 78Q635.500 76 637 76T640 79L641 81M644 70V76M647 66V76M650 68V76"/>
</g>
<path d="M693 63 706 69.500 693 76 680 69.500Z" fill="#b8cbe0"/>
<path d="M680 69.500 693 76V89L680 83Z" fill="#9ab4d2"/>
<path d="M706 69.500 693 76V89L706 83Z" fill="#94aecb"/>
<path d="M693 63 706 69.500V83L693 89 680 83V69.500ZM680 69.500 693 76 706 69.500M693 76V89" fill="none" stroke="#cfdbe9" stroke-width=".8"/>
<path d="M739 81 752.500 68 766 81" fill="none" stroke="#e6edf5" stroke-width="1.200"/>
</svg>
</body></html>
